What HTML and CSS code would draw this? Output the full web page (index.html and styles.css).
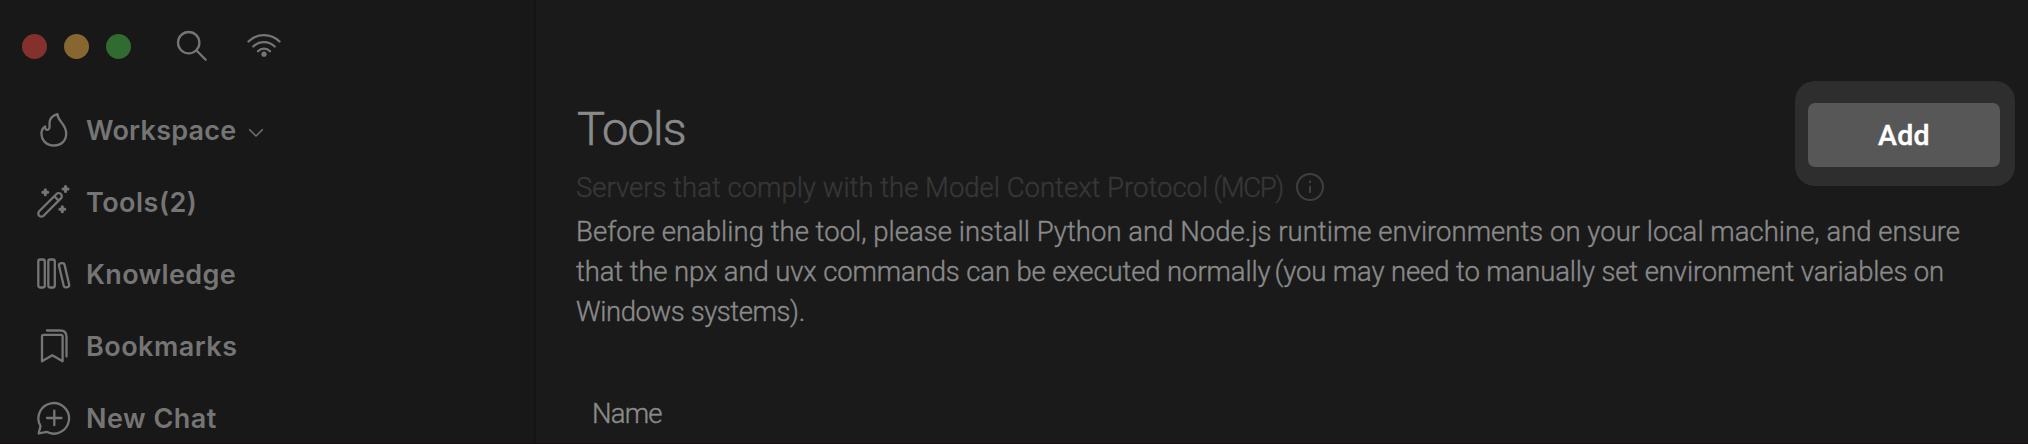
FILE: index.html
```
<!DOCTYPE html>
<html lang="en">
<head>
<meta charset="utf-8">
<title>Tools</title>
<link rel="stylesheet" href="styles.css">
</head>
<body>
<div class="app">
  <aside class="sidebar">
    <div class="titlebar">
      <span class="light red"></span><span class="light yellow"></span><span class="light green"></span>
      <svg class="icon search" width="32" height="32" viewBox="0 0 32 32"><circle cx="12.700" cy="12.700" r="10.700"/><path d="M20.500 20.500 29.700 29.700"/></svg>
      <svg class="icon wifi" width="36" height="28" viewBox="0 0 36 28"><path d="M2.500 10.500a22 22 0 0 1 31 0M7.300 15.500a15.200 15.200 0 0 1 21.400 0M12 20.200a8.500 8.500 0 0 1 12 0"/><circle class="dot" cx="18" cy="23.200" r="2.600"/></svg>
    </div>
    <nav class="menu">
      <a class="item"><svg class="icon" width="36" height="36" viewBox="0 0 36 36"><path d="M20.500 2.200c-5.500 1.500-8 5.500-8 9.500 0 2.500.4 3.600-.4 5-1 1.700-3 1.500-3.700-.2-.3-.8-.4-1.400-.3-2.100C5.500 16 4.500 18.500 4.500 21.300 4.500 28.500 9.500 33.500 17 33.500s12.200-5 12.200-12c0-5-2.500-8.500-5.200-11.700-2.200-2.600-3.500-4.600-3.500-7.600z"/></svg><span class="workspace">Workspace</span><svg class="chevron" width="16" height="10" viewBox="0 0 16 10"><path d="M1.200 1.200 8 8l6.800-6.800"/></svg></a>
      <a class="item"><svg class="icon" width="36" height="36" viewBox="0 0 36 36"><path d="M2.200 27.300 19.500 10a3.100 3.100 0 0 1 4.400 4.400L6.600 31.700a3.100 3.100 0 0 1-4.400-4.400zM17.500 12.500l3.900 3.900"/><path class="spark" d="M8.300 5.700v5M5.800 8.200h5M28.500 2.500v5M26 5h5M25.300 22.800v5M22.800 25.300h5"/></svg><span class="tools">Tools(2)</span></a>
      <a class="item"><svg class="icon" width="36" height="36" viewBox="0 0 36 36"><rect x="1.300" y="3.500" width="6.500" height="28" rx="2"/><rect x="11.300" y="3.500" width="6.500" height="28" rx="2"/><rect x="24.300" y="7" width="5.600" height="24.500" rx="2" transform="rotate(-13 27.100 19.200)"/></svg><span class="knowledge">Knowledge</span></a>
      <a class="item"><svg class="icon" width="36" height="36" viewBox="0 0 36 36"><path d="M5 33.300V8.500q0-1.700 1.700-1.700h17.200q1.700 0 1.700 1.700v24.800l-10.300-6zM10 2.500h13.200q6.300 0 6.300 6.300V28.500"/></svg><span class="bookmarks">Bookmarks</span></a>
      <a class="item"><svg class="icon" width="36" height="36" viewBox="0 0 36 36"><path d="M1.700 33.500 3.500 26A15.300 15.300 0 1 1 9.500 31.800zM17.300 10.700v14.500M10 18h14.500"/></svg><span class="newchat">New Chat</span></a>
    </nav>
  </aside>
  <main class="content">
    <header class="head">
      <h1 class="title">Tools</h1>
      <div class="spot"><button class="add">Add</button></div>
    </header>
    <div class="subtitle"><span>Servers that comply with the Model Context Protocol</span><span class="mcp">(MCP)</span><svg class="info" width="30" height="30" viewBox="0 0 30 30"><circle cx="15" cy="15" r="13"/><path d="M15 14v7M15 8.500v2.500"/></svg></div>
    <p class="note"><span class="l1">Before enabling the tool, please install Python and Node.js runtime environments on your local machine, and ensure</span><span class="l2">that the npx and uvx commands can be executed normally<i class="open">(</i>you may need to manually set environment variables on</span><span class="l3">Windows systems).</span></p>
    <div class="th">Name</div>
  </main>
</div>
</body>
</html>
```
FILE: styles.css
```
* { box-sizing: border-box; }
body { margin: 0; background: #1a1a1a; }
.app { display: flex; width: 2028px; height: 444px; overflow: hidden; border-bottom: 1px solid #150f13; font-family: Roboto, "Liberation Sans", sans-serif; }
.sidebar { width: 536px; flex: none; background: #181818; border-right: 2px solid #141414; color: #757575; font-family: Inter, "Liberation Sans", sans-serif; }
.titlebar { display: flex; align-items: center; height: 94px; padding: 0 0 1px 22px; }
.light { width: 25px; height: 25px; border-radius: 50%; margin-right: 17px; }
.red { background: #84302c; }
.yellow { background: #87672f; }
.green { background: #306b2f; }
.icon { fill: none; stroke: #757575; stroke-width: 2.300; stroke-linecap: round; stroke-linejoin: round; flex: none; }
.search { margin: 0 0 2px 28px; }
.wifi { margin: 0 0 3px 38px; }
.wifi .dot { fill: #757575; stroke: none; }
.menu { display: flex; flex-direction: column; }
.item { display: flex; flex: none; align-items: center; height: 72px; padding-left: 37px; font-size: 27px; font-weight: 600; letter-spacing: 0.350px; white-space: nowrap; }
.item .icon { margin-right: 13px; }
.workspace { letter-spacing: 0.250px; }
.tools, .bookmarks, .newchat { letter-spacing: 0.480px; }
.spark { stroke-width: 3; }
.chevron { margin: 5px 0 0 11px; fill: none; stroke: #757575; stroke-width: 1.400; }
.content { flex: 1; padding: 81px 13px 0 40px; color: #8a8a8a; -webkit-text-stroke: 0.400px; }
.head { display: flex; justify-content: space-between; height: 89px; }
.title { margin: 20px 0 0 1px; font-size: 47px; line-height: 56px; font-weight: 300; letter-spacing: -0.800px; -webkit-text-stroke: 0.600px; }
.spot { width: 220px; height: 105px; padding: 22px 0 0 13px; border-radius: 20px; background: #2e2e2e; }
.add { display: block; width: 192px; height: 64px; border: 0; border-radius: 7px; padding: 0; background: #575757; color: #fff; font: 500 28.500px/66px Roboto, "Liberation Sans", sans-serif; letter-spacing: 0.300px; }
.subtitle { display: flex; align-items: center; width: 900px; height: 34px; font-size: 27.500px; font-weight: 300; color: #373737; white-space: nowrap; }
.mcp { margin-left: 5px; letter-spacing: -1.300px; }
.info { margin-left: 12px; fill: none; stroke: #3f3f3f; stroke-width: 2; }
.note { margin: 8px 0 0; font-size: 27.500px; line-height: 40px; font-weight: 300; white-space: nowrap; }
.note span { display: block; width: max-content; }
.l1 { letter-spacing: 0.020px; }
.l2 { letter-spacing: -0.120px; }
.l3 { letter-spacing: -0.420px; }
.open { font-style: normal; margin-left: 4px; }
.th { margin: 66px 0 0 16px; font-size: 27.500px; line-height: 32px; font-weight: 300; letter-spacing: -0.800px; }
```
